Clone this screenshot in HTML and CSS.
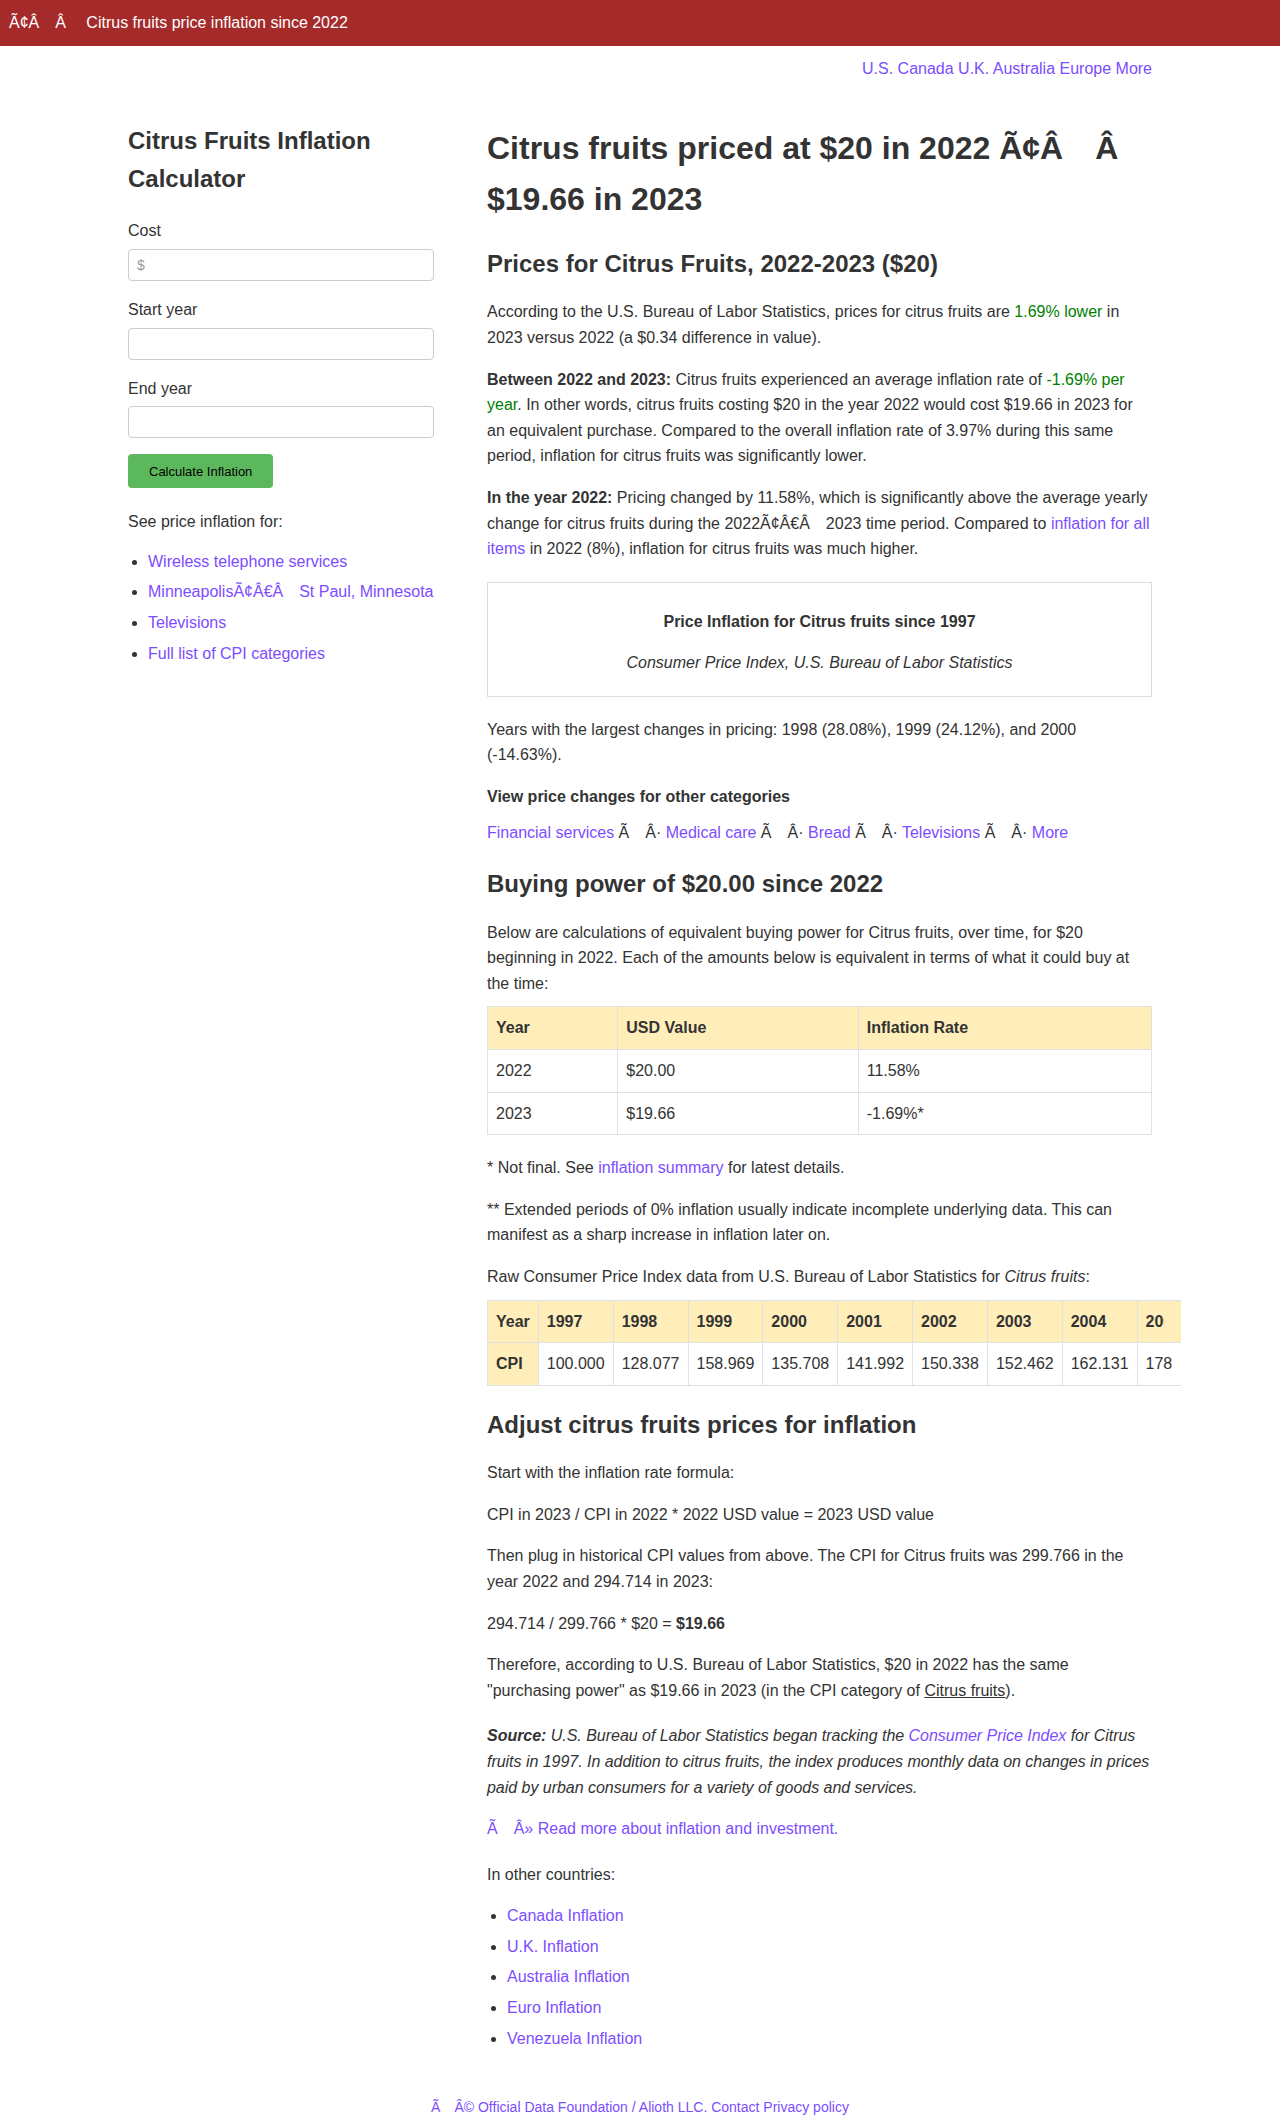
FILE: index.html
```html
<!DOCTYPE html>
<html lang="en">
<head>
<meta charset="utf-8">
<title>Citrus fruits price inflation since 2022</title>
<link rel="stylesheet" href="styles.css">
</head>
<body>
<header class="topbar">
  <span class="brand">Ã¢Â&emsp;Â&emsp; Citrus fruits price inflation since 2022</span>
</header>

<div class="container">
  <nav class="country-nav">
    <a href="#">U.S.</a> <a href="#">Canada</a> <a href="#">U.K.</a> <a href="#">Australia</a> <a href="#">Europe</a> <a href="#">More</a>
  </nav>

  <div class="layout">
    <aside class="sidebar">
      <h2 class="calc-title">Citrus Fruits Inflation Calculator</h2>
      <form class="calc-form">
        <div class="field">
          <label for="cost">Cost</label>
          <input id="cost" type="text" placeholder="$">
        </div>
        <div class="field">
          <label for="start">Start year</label>
          <input id="start" type="text">
        </div>
        <div class="field">
          <label for="end">End year</label>
          <input id="end" type="text">
        </div>
        <button type="button" class="calc-btn">Calculate Inflation</button>
      </form>
      <p class="see-also">See price inflation for:</p>
      <ul class="side-list">
        <li><a href="#">Wireless telephone services</a></li>
        <li><a href="#">MinneapolisÃ¢Â€Â&emsp;St Paul, Minnesota</a></li>
        <li><a href="#">Televisions</a></li>
        <li><a href="#">Full list of CPI categories</a></li>
      </ul>
    </aside>

    <main class="main">
      <h1>Citrus fruits priced at $20 in 2022 Ã¢Â&emsp;Â&emsp; $19.66 in 2023</h1>

      <h2>Prices for Citrus Fruits, 2022-2023 ($20)</h2>
      <p>According to the U.S. Bureau of Labor Statistics, prices for citrus fruits are <span class="green">1.69% lower</span> in 2023 versus 2022 (a $0.34 difference in value).</p>
      <p><strong>Between 2022 and 2023:</strong> Citrus fruits experienced an average inflation rate of <span class="green">-1.69% per year</span>. In other words, citrus fruits costing $20 in the year 2022 would cost $19.66 in 2023 for an equivalent purchase. Compared to the overall inflation rate of 3.97% during this same period, inflation for citrus fruits was significantly lower.</p>
      <p><strong>In the year 2022:</strong> Pricing changed by 11.58%, which is significantly above the average yearly change for citrus fruits during the 2022Ã¢Â€Â&emsp;2023 time period. Compared to <a href="#">inflation for all items</a> in 2022 (8%), inflation for citrus fruits was much higher.</p>

      <div class="chart-box">
        <p class="chart-title">Price Inflation for Citrus fruits since 1997</p>
        <p class="chart-sub">Consumer Price Index, U.S. Bureau of Labor Statistics</p>
      </div>

      <p>Years with the largest changes in pricing: 1998 (28.08%), 1999 (24.12%), and 2000 (-14.63%).</p>
      <p class="cats-title">View price changes for other categories</p>
      <p><a href="#">Financial services</a> Ã&emsp;Â· <a href="#">Medical care</a> Ã&emsp;Â· <a href="#">Bread</a> Ã&emsp;Â· <a href="#">Televisions</a> Ã&emsp;Â· <a href="#">More</a></p>

      <h2>Buying power of $20.00 since 2022</h2>
      <p class="pre-table">Below are calculations of equivalent buying power for Citrus fruits, over time, for $20 beginning in 2022. Each of the amounts below is equivalent in terms of what it could buy at the time:</p>
      <table class="value-table">
        <thead>
          <tr><th>Year</th><th>USD Value</th><th>Inflation Rate</th></tr>
        </thead>
        <tbody>
          <tr><td>2022</td><td>$20.00</td><td>11.58%</td></tr>
          <tr><td>2023</td><td>$19.66</td><td>-1.69%*</td></tr>
        </tbody>
      </table>

      <p>* Not final. See <a href="#">inflation summary</a> for latest details.</p>
      <p>** Extended periods of 0% inflation usually indicate incomplete underlying data. This can manifest as a sharp increase in inflation later on.</p>
      <p class="pre-table">Raw Consumer Price Index data from U.S. Bureau of Labor Statistics for <em>Citrus fruits</em>:</p>
      <div class="cpi-wrap">
        <table class="cpi-table">
          <tr><th>Year</th><th>1997</th><th>1998</th><th>1999</th><th>2000</th><th>2001</th><th>2002</th><th>2003</th><th>2004</th><th class="cut"><span class="clip">2005</span></th></tr>
          <tr><th>CPI</th><td>100.000</td><td>128.077</td><td>158.969</td><td>135.708</td><td>141.992</td><td>150.338</td><td>152.462</td><td>162.131</td><td class="cut">178</td></tr>
        </table>
      </div>

      <h2>Adjust citrus fruits prices for inflation</h2>
      <p>Start with the inflation rate formula:</p>
      <p>CPI in 2023 / CPI in 2022 * 2022 USD value = 2023 USD value</p>
      <p>Then plug in historical CPI values from above. The CPI for Citrus fruits was 299.766 in the year 2022 and 294.714 in 2023:</p>
      <p>294.714 / 299.766 * $20 = <strong>$19.66</strong></p>
      <p>Therefore, according to U.S. Bureau of Labor Statistics, $20 in 2022 has the same "purchasing power" as $19.66 in 2023 (in the CPI category of <span class="underline">Citrus fruits</span>).</p>
      <p class="source"><strong>Source:</strong> U.S. Bureau of Labor Statistics began tracking the <a href="#">Consumer Price Index</a> for Citrus fruits in 1997. In addition to citrus fruits, the index produces monthly data on changes in prices paid by urban consumers for a variety of goods and services.</p>
      <p class="read-more"><a href="#">Ã&emsp;Â» Read more about inflation and investment.</a></p>
      <p>In other countries:</p>
      <ul class="country-list">
        <li><a href="#">Canada Inflation</a></li>
        <li><a href="#">U.K. Inflation</a></li>
        <li><a href="#">Australia Inflation</a></li>
        <li><a href="#">Euro Inflation</a></li>
        <li><a href="#">Venezuela Inflation</a></li>
      </ul>
    </main>
  </div>
</div>

<footer class="footer">
  <a href="#">Ã&emsp;Â© Official Data Foundation / Alioth LLC.</a> <a href="#">Contact</a> <a href="#">Privacy policy</a>
</footer>
</body>
</html>
```

FILE: styles.css
```css
* {
  box-sizing: border-box;
}

html,
body {
  margin: 0;
  padding: 0;
}

body {
  font-family: "Liberation Sans", Arial, Helvetica, sans-serif;
  font-size: 16px;
  line-height: 1.6;
  color: #333;
  background: #fff;
}

a {
  color: #7c4dff;
  text-decoration: none;
}

.topbar {
  background: #a52a2a;
  color: #fff;
  height: 46px;
  line-height: 46px;
  padding: 0 9px;
  font-size: 16px;
}

.container {
  width: 1024px;
  margin: 0 auto;
}

.country-nav {
  margin-top: 10px;
  text-align: right;
}

.layout {
  display: grid;
  grid-template-columns: 306px 665px;
  justify-content: space-between;
  align-items: start;
  padding-top: 40px;
}

/* Sidebar */
.calc-title {
  font-size: 24px;
  line-height: 1.6;
  font-weight: bold;
  margin: 0;
}

.calc-form {
  margin-top: 20px;
}

.field {
  margin-bottom: 16px;
}

.field label {
  display: block;
  margin-bottom: 5px;
}

.field input {
  display: block;
  width: 100%;
  height: 32px;
  border: 1px solid #ccc;
  border-radius: 4px;
  padding: 0 8px;
  font-family: "Liberation Sans", Arial, sans-serif;
  font-size: 14px;
  color: #333;
  background: #fff;
}

.field input::placeholder {
  color: #999;
}

.calc-btn {
  display: block;
  height: 34px;
  padding: 0 21px;
  background: #5cb85c;
  border: none;
  border-radius: 4px;
  font-family: "Liberation Sans", Arial, sans-serif;
  font-size: 13px;
  color: #000;
}

.see-also {
  margin: 21px 0 0;
}

.side-list {
  margin: 14px 0 0;
  padding-left: 20px;
}

.side-list li,
.country-list li {
  margin-bottom: 5px;
}

/* Main column */
.main h1 {
  font-size: 32px;
  line-height: 1.6;
  font-weight: bold;
  margin: 1px 0 0;
}

.main h2 {
  font-size: 24px;
  line-height: 1.6;
  font-weight: bold;
  margin: 20px 0 16px;
}

.main p {
  margin: 0 0 16px;
}

.green {
  color: #008000;
}

.underline {
  text-decoration: underline;
}

.chart-box {
  border: 1px solid #ddd;
  padding: 26px 16px 20px;
  margin: 20px 0;
  text-align: center;
}

.chart-box .chart-title {
  font-weight: bold;
  margin: 0 0 16px;
}

.chart-box .chart-sub {
  font-style: italic;
  margin: 0;
}

.main .cats-title {
  font-weight: bold;
  margin-bottom: 10px;
}

.main .pre-table {
  margin-bottom: 10px;
}

.value-table {
  width: 100%;
  border-collapse: collapse;
  margin-bottom: 20px;
}

.value-table th,
.value-table td {
  border: 1px solid #dee2e6;
  padding: 8px;
  text-align: left;
}

.value-table thead th {
  background: #ffeeba;
}

.cpi-wrap {
  margin: 0 -29px 20px 0;
  overflow: hidden;
}

.cpi-table {
  border-collapse: collapse;
  white-space: nowrap;
}

.cpi-table th,
.cpi-table td {
  border: 1px solid #dee2e6;
  padding: 8px;
  text-align: left;
}

.cpi-table th {
  background: #ffeeba;
}

.cpi-table .cut {
  min-width: 75px;
}

.cpi-table .clip {
  display: inline-block;
  width: 18px;
  overflow: hidden;
  vertical-align: top;
}

.main .source {
  font-style: italic;
  margin-top: 20px;
  letter-spacing: -0.03px;
}

.main .read-more {
  margin-bottom: 20px;
}

.country-list {
  margin: 0;
  padding-left: 20px;
}

.footer {
  text-align: center;
  font-size: 14px;
  padding-top: 40px;
}
```
